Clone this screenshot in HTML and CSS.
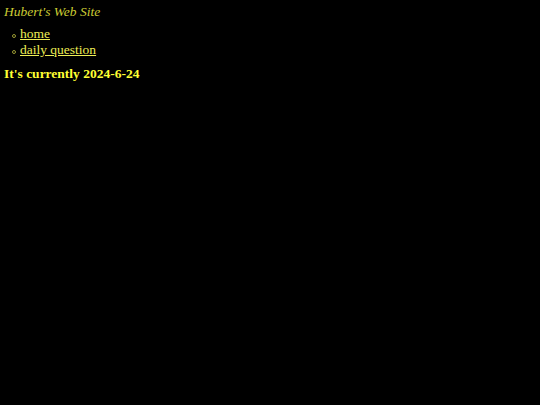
FILE: index.html
```html
<!DOCTYPE html>
<html>
<head>
<meta charset="utf-8">
<title>Hubert's Web Site</title>
<link rel="stylesheet" href="styles.css">
</head>
<body>
<div class="site-title">Hubert's Web Site</div>
<ul class="nav">
<li><a href="#">home</a></li>
<li><a href="#">daily question</a></li>
</ul>
<h1 class="date">It's currently 2024-6-24</h1>
</body>
</html>
```
FILE: styles.css
```css
html, body {
  background: #000;
}
body {
  margin: 0;
  padding: 4px;
  font-family: "Liberation Serif", "Times New Roman", serif;
  color: #ffff33;
}
.site-title {
  font-style: italic;
  font-size: 13.5px;
  color: #cccc33;
  line-height: 16px;
}
.nav {
  margin: 6px 0 0 0;
  padding-left: 16px;
  list-style: none;
  font-size: 13.5px;
  line-height: 16px;
}
.nav li {
  position: relative;
}
.nav li::before {
  content: "";
  position: absolute;
  left: -8px;
  top: 8px;
  width: 2px;
  height: 2px;
  border: 1px solid #999933;
  border-radius: 50%;
}
.nav a {
  color: #eeee55;
  text-decoration: underline;
}
.date {
  font-size: 13.5px;
  font-weight: bold;
  margin: 8px 0 0 0;
  color: #ffff33;
}
```
